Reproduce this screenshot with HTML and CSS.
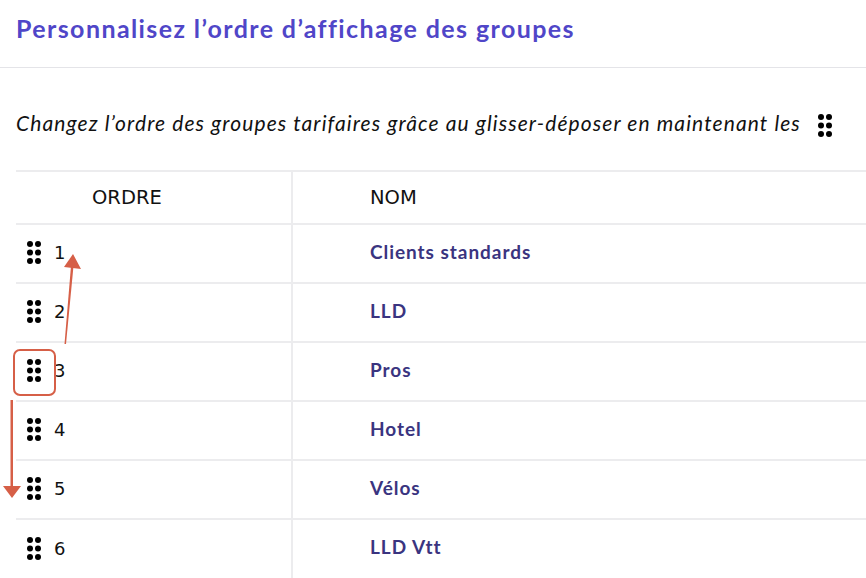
FILE: index.html
```html
<!DOCTYPE html>
<html lang="fr">
<head>
<meta charset="utf-8">
<title>Ordre des groupes</title>
<link rel="stylesheet" href="styles.css">
</head>
<body>
<div class="page">
  <header class="head">
    <h1 class="title">Personnalisez l’ordre d’affichage des groupes</h1>
  </header>
  <p class="desc">Changez l’ordre des groupes tarifaires grâce au glisser-déposer en maintenant les
    <svg class="grip grip-desc" viewBox="0 0 16 25" width="16" height="25"><circle cx="4" cy="4" r="3"/><circle cx="12" cy="4" r="3"/><circle cx="4" cy="12.5" r="3"/><circle cx="12" cy="12.5" r="3"/><circle cx="4" cy="21" r="3"/><circle cx="12" cy="21" r="3"/></svg>
  </p>
  <table class="tbl">
    <thead>
      <tr><th class="c-ord">ORDRE</th><th class="c-nom">NOM</th></tr>
    </thead>
    <tbody>
      <tr><td class="c-ord"><span class="handle"><svg class="grip" viewBox="0 0 16 25" width="16" height="25"><circle cx="4" cy="4" r="3"/><circle cx="12" cy="4" r="3"/><circle cx="4" cy="12.5" r="3"/><circle cx="12" cy="12.5" r="3"/><circle cx="4" cy="21" r="3"/><circle cx="12" cy="21" r="3"/></svg></span><span class="num">1</span></td><td class="c-nom">Clients standards</td></tr>
      <tr><td class="c-ord"><span class="handle"><svg class="grip" viewBox="0 0 16 25" width="16" height="25"><circle cx="4" cy="4" r="3"/><circle cx="12" cy="4" r="3"/><circle cx="4" cy="12.5" r="3"/><circle cx="12" cy="12.5" r="3"/><circle cx="4" cy="21" r="3"/><circle cx="12" cy="21" r="3"/></svg></span><span class="num">2</span></td><td class="c-nom">LLD</td></tr>
      <tr><td class="c-ord"><span class="handle boxed"><svg class="grip" viewBox="0 0 16 25" width="16" height="25"><circle cx="4" cy="4" r="3"/><circle cx="12" cy="4" r="3"/><circle cx="4" cy="12.5" r="3"/><circle cx="12" cy="12.5" r="3"/><circle cx="4" cy="21" r="3"/><circle cx="12" cy="21" r="3"/></svg></span><span class="num">3</span></td><td class="c-nom">Pros</td></tr>
      <tr><td class="c-ord"><span class="handle"><svg class="grip" viewBox="0 0 16 25" width="16" height="25"><circle cx="4" cy="4" r="3"/><circle cx="12" cy="4" r="3"/><circle cx="4" cy="12.5" r="3"/><circle cx="12" cy="12.5" r="3"/><circle cx="4" cy="21" r="3"/><circle cx="12" cy="21" r="3"/></svg></span><span class="num">4</span></td><td class="c-nom">Hotel</td></tr>
      <tr><td class="c-ord"><span class="handle"><svg class="grip" viewBox="0 0 16 25" width="16" height="25"><circle cx="4" cy="4" r="3"/><circle cx="12" cy="4" r="3"/><circle cx="4" cy="12.5" r="3"/><circle cx="12" cy="12.5" r="3"/><circle cx="4" cy="21" r="3"/><circle cx="12" cy="21" r="3"/></svg></span><span class="num">5</span></td><td class="c-nom">Vélos</td></tr>
      <tr><td class="c-ord"><span class="handle"><svg class="grip" viewBox="0 0 16 25" width="16" height="25"><circle cx="4" cy="4" r="3"/><circle cx="12" cy="4" r="3"/><circle cx="4" cy="12.5" r="3"/><circle cx="12" cy="12.5" r="3"/><circle cx="4" cy="21" r="3"/><circle cx="12" cy="21" r="3"/></svg></span><span class="num">6</span></td><td class="c-nom">LLD Vtt</td></tr>
    </tbody>
  </table>
  <svg class="annot" width="866" height="578" viewBox="0 0 866 578">
    <path d="M64.5 344 L66 344 L73.5 266 L71 266 Z" fill="#d65f47"/>
    <path d="M64 267 L73 254 L81 269 Z" fill="#d65f47"/>
    <path d="M10.5 400 L13 400 L13 488 L10.5 488 Z" fill="#d65f47"/>
    <path d="M3 486 L21 486 L12 498 Z" fill="#d65f47"/>
  </svg>
</div>
</body>
</html>
```

FILE: styles.css
```css
* { box-sizing: border-box; }
html, body { margin: 0; padding: 0; background: #fff; }
body { font-family: "Lato", "Liberation Sans", sans-serif; color: #111; overflow: hidden; }
.page { position: relative; width: 866px; height: 578px; overflow: hidden; }
.head { height: 68px; border-bottom: 1px solid #e4e4e8; padding: 13px 0 0 16px; }
.title { margin: 0; font-size: 25px; line-height: 30px; font-weight: 700; color: #5046c8; letter-spacing: 1.4px; white-space: nowrap; }
.desc { margin: 0; padding: 42px 0 0 16px; height: 102px; font-size: 21px; font-style: italic; line-height: 26px; color: #111; display: flex; align-items: flex-start; gap: 16px; letter-spacing: 1.1px; white-space: nowrap; }
.grip { display: block; fill: #000; }
.grip-desc { margin-top: 3px; }
.tbl { margin-left: 16px; width: 850px; border-collapse: collapse; }
.tbl th, .tbl td { border-top: 2px solid #ececee; padding: 0; text-align: left; }
.tbl th { height: 53px; font-family: "DejaVu Sans", sans-serif; font-size: 19.5px; font-weight: 400; color: #111; }
.tbl td { height: 59px; }
.tbl .c-ord { width: 276px; border-right: 2px solid #ececee; }
.tbl th.c-ord { padding-left: 76px; }
.tbl th.c-nom { padding-left: 77px; }
.tbl td.c-ord { padding-left: 10px; padding-bottom: 2px; }
.tbl td.c-nom { padding-left: 77px; padding-bottom: 5px; font-size: 19px; font-weight: 700; color: #3a3480; letter-spacing: 0.95px; }
.handle { display: inline-block; vertical-align: middle; width: 16px; height: 25px; position: relative; margin-right: 12px; }
.handle.boxed::after { content: ""; position: absolute; left: -13px; top: -9px; width: 39px; height: 43px; border: 2px solid #d65f47; border-radius: 7px; }
.num { vertical-align: middle; font-family: "DejaVu Sans", sans-serif; font-size: 18px; color: #111; }
.annot { position: absolute; left: 0; top: 0; pointer-events: none; }
```
